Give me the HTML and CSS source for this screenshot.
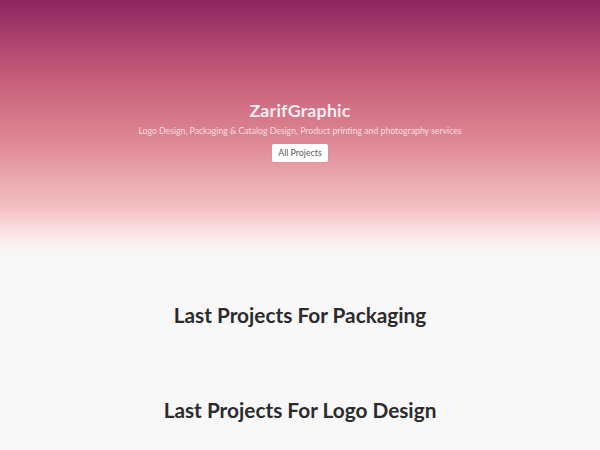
FILE: index.html
```html
<!DOCTYPE html>
<html>
<head>
<meta charset="utf-8">
<link rel="stylesheet" href="styles.css">
</head>
<body>
<header class="hero">
  <h1 class="brand">ZarifGraphic</h1>
  <p class="tagline">Logo Design, Packaging &amp; Catalog Design, Product printing and photography services</p>
  <a class="btn">All Projects</a>
</header>
<section class="section">
  <h2 class="section-title">Last Projects For Packaging</h2>
</section>
<section class="section">
  <h2 class="section-title">Last Projects For Logo Design</h2>
</section>
</body>
</html>
```
FILE: styles.css
```css
html, body {
  margin: 0;
  padding: 0;
}
body {
  background: #f8f8f9;
  font-family: Lato, "Noto Sans", sans-serif;
  color: #212529;
}
.hero {
  height: 262px;
  display: flex;
  flex-direction: column;
  align-items: center;
  justify-content: flex-start;
  padding-top: 100px;
  box-sizing: border-box;
  background: linear-gradient(to bottom, #8d2460 0%, #c45a78 28%, #e08a95 55%, #f4c2c5 80%, #fbeef0 92%, #f8f8f9 100%);
}
.brand {
  margin: 0;
  font-size: 17.8px;
  font-weight: 700;
  color: #f8eef1;
  letter-spacing: 0.2px;
  line-height: 20px;
}
.tagline {
  margin: 5px 0 0;
  font-size: 8.7px;
  color: #f6dde3;
  line-height: 11px;
}
.btn {
  margin-top: 8px;
  display: inline-block;
  background: #ffffff;
  color: #555a60;
  font-size: 8.8px;
  padding: 4px 6px;
  border-radius: 2px;
  line-height: 10px;
  box-shadow: 0 0 1px rgba(0,0,0,0.2);
}
.section {
  display: flex;
  justify-content: center;
}
.section:nth-of-type(1) {
  padding-top: 41px;
}
.section + .section {
  padding-top: 71px;
}
.section-title {
  margin: 0;
  font-size: 20.8px;
  font-weight: 700;
  color: #2b2b2e;
  line-height: 24px;
}
```
